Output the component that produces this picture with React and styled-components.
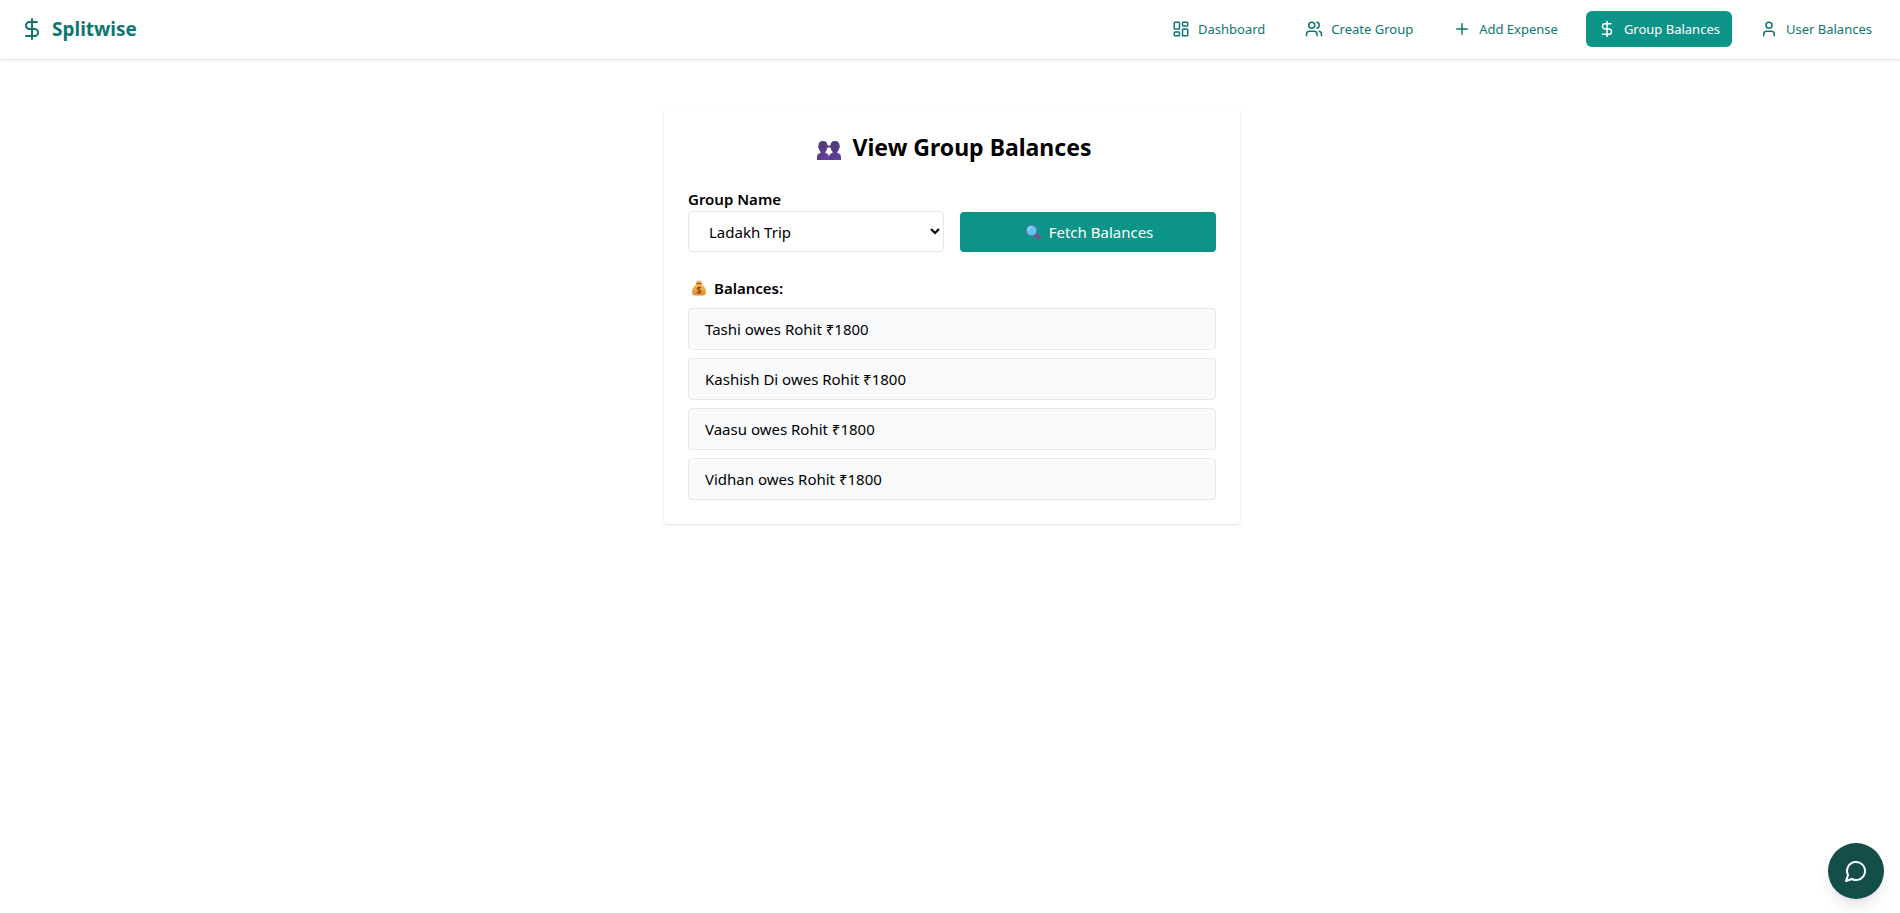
import React, { useState } from "react";
import styled, { createGlobalStyle, css } from "styled-components";
import { DollarSign, LayoutDashboard, Users, Plus, User } from "lucide-react";

const GlobalStyle = createGlobalStyle`
  *, *::before, *::after { box-sizing: border-box; }
  body {
    margin: 0;
    background: #ffffff;
    color: #000000;
    font-family: "Segoe UI", "Noto Sans", "Open Sans", sans-serif;
    font-size: 15px;
    line-height: 24px;
  }
  h1, h2, ul { margin: 0; padding: 0; }
  button, select { font: inherit; }
`;

const Header = styled.header`
  display: flex;
  align-items: center;
  justify-content: space-between;
  padding: 11px 16px 12px 20px;
  background: #ffffff;
  box-shadow: 0 1px 3px rgba(0, 0, 0, 0.1), 0 1px 2px -1px rgba(0, 0, 0, 0.1);
`;

const Brand = styled.a`
  display: flex;
  align-items: center;
  gap: 8px;
  color: #0f766e;
  font-size: 19px;
  font-weight: 700;
  line-height: 28px;
  text-decoration: none;
`;

const Nav = styled.nav`
  display: flex;
  align-items: center;
  gap: 16px;
`;

const NavLink = styled.a`
  display: flex;
  align-items: center;
  gap: 8px;
  padding: 8px 12px;
  border-radius: 6px;
  color: #0f766e;
  font-size: 13px;
  line-height: 20px;
  text-decoration: none;
  white-space: nowrap;
  ${({ $active }) =>
    $active &&
    css`
      background: #0d9488;
      color: #ffffff;
    `}
`;

const Main = styled.main`
  display: flex;
  justify-content: center;
  padding: 48px 16px 48px 20px;
`;

const Card = styled.section`
  width: 100%;
  max-width: 576px;
  padding: 24px;
  border-radius: 4px;
  background: #ffffff;
  box-shadow: 0 1px 3px rgba(0, 0, 0, 0.1), 0 1px 2px -1px rgba(0, 0, 0, 0.1);
`;

const Title = styled.h1`
  display: flex;
  align-items: center;
  justify-content: center;
  gap: 8px;
  margin-bottom: 24px;
  font-size: 23px;
  font-weight: 700;
  line-height: 32px;
`;

const Form = styled.form`
  display: grid;
  grid-template-columns: 1fr 1fr;
  align-items: end;
  gap: 16px;
  margin-bottom: 24px;
`;

const Field = styled.div`
  display: flex;
  flex-direction: column;
`;

const Label = styled.label`
  font-weight: 600;
`;

const Select = styled.select`
  width: 100%;
  height: 41px;
  padding: 8px 0 8px 16px;
  border: 1px solid #e5e7eb;
  border-radius: 4px;
  background: #ffffff;
  color: #000000;
`;

const FetchButton = styled.button`
  display: flex;
  align-items: center;
  justify-content: center;
  gap: 6px;
  padding: 8px 16px;
  border: 0;
  border-radius: 4px;
  background: #0d9488;
  color: #ffffff;
  cursor: pointer;
`;

const Subtitle = styled.h2`
  display: flex;
  align-items: center;
  gap: 6px;
  margin-bottom: 8px;
  font-size: 15px;
  font-weight: 600;
`;

const BalanceList = styled.ul`
  display: flex;
  flex-direction: column;
  gap: 8px;
  list-style: none;
`;

const BalanceItem = styled.li`
  padding: 8px 16px;
  border: 1px solid #e5e7eb;
  border-radius: 4px;
  background: #f9fafb;
`;

const ChatButton = styled.button`
  position: fixed;
  right: 16px;
  bottom: 14px;
  display: flex;
  align-items: center;
  justify-content: center;
  width: 56px;
  height: 56px;
  padding: 0;
  border: 0;
  border-radius: 50%;
  background: #134e4a;
  color: #ffffff;
  box-shadow: 0 10px 15px -3px rgba(0, 0, 0, 0.1), 0 4px 6px -4px rgba(0, 0, 0, 0.1);
  cursor: pointer;
`;

const PeopleIcon = () => (
  <svg width="32" height="28" viewBox="-1 -2 32 28" aria-hidden="true">
    <defs>
      <linearGradient id="person" x1="0" y1="0" x2="1" y2="1">
        <stop offset="0" stopColor="#433b6b" />
        <stop offset="1" stopColor="#6b3fa6" />
      </linearGradient>
    </defs>
    <g fill="url(#person)">
      <path d="M9 6C5.800 6 4.500 8 4.500 10.500C3.800 11 4 13 4.900 13.200C5.200 15 5.800 16 6.600 16.700V18L5 18.500Q3 19.300 3 22V25H15V22Q15 19.300 13 18.500L11.400 18V16.700C12.200 16 12.800 15 13.100 13.200C14 13 14.200 11 13.500 10.500C13.500 8 12.200 6 9 6Z" />
      <path d="M21 6C17.800 6 16.500 8 16.500 10.500C15.800 11 16 13 16.900 13.200C17.200 15 17.800 16 18.600 16.700V18L17 18.500Q15 19.300 15 22V25H27V22Q27 19.300 25 18.500L23.400 18V16.700C24.200 16 24.800 15 25.100 13.200C26 13 26.200 11 25.500 10.500C25.500 8 24.200 6 21 6Z" />
      <path d="M13 10.500H17V12.500H13Z" />
    </g>
  </svg>
);

const MagnifierIcon = () => (
  <svg width="20" height="16" viewBox="-2 0 20 16" aria-hidden="true">
    <path d="M10.500 10.500L14 14" stroke="#8c4a8c" strokeWidth="3.200" strokeLinecap="round" />
    <circle cx="6.500" cy="6.500" r="5.500" fill="#5cc8ea" stroke="#5a6cae" strokeWidth="1.200" />
    <path d="M3.300 6.500A3.300 3.300 0 0 1 6.500 3.200" fill="none" stroke="#8fe0f5" strokeWidth="1.200" />
  </svg>
);

const MoneyBagIcon = () => (
  <svg width="20" height="18" viewBox="0 0 20 18" aria-hidden="true">
    <defs>
      <linearGradient id="bag" x1="0" y1="0" x2="0" y2="1">
        <stop offset="0" stopColor="#fbc54a" />
        <stop offset="1" stopColor="#e8862a" />
      </linearGradient>
    </defs>
    <path d="M8.500 5C5.500 7 4 10 4 13C4 15.600 5.600 16.500 8 16.500H14C16.400 16.500 18 15.600 18 13C18 10 16.500 7 13.500 5Z" fill="url(#bag)" />
    <path d="M8.300 2L9.500 2.300L11 1.500L12.500 2.300L13.700 2L12.900 4.300H9.100Z" fill="#f0a43a" />
    <path d="M8.500 4.700H13.500" stroke="#a8552b" strokeWidth="1.300" strokeLinecap="round" />
    <path d="M12.900 9.200Q12.600 8.300 11 8.300Q9.300 8.300 9.300 9.800Q9.300 10.900 11 11.100Q12.900 11.300 12.900 12.600Q12.900 14 11 14Q9.300 14 9 13M11 7.300V15" fill="none" stroke="#8a4a24" strokeWidth="1.200" />
  </svg>
);

const ChatIcon = () => (
  <svg width="24" height="24" viewBox="0 0 24 24" fill="none" stroke="currentColor" strokeWidth="2" strokeLinecap="round" strokeLinejoin="round" aria-hidden="true">
    <path d="M7.900 20A9 9 0 1 0 4 16.100L2 22Z" />
  </svg>
);

const links = [
  { label: "Dashboard", icon: LayoutDashboard },
  { label: "Create Group", icon: Users },
  { label: "Add Expense", icon: Plus },
  { label: "Group Balances", icon: DollarSign, active: true },
  { label: "User Balances", icon: User },
];

const balances = [
  { from: "Tashi", to: "Rohit", amount: 1800 },
  { from: "Kashish Di", to: "Rohit", amount: 1800 },
  { from: "Vaasu", to: "Rohit", amount: 1800 },
  { from: "Vidhan", to: "Rohit", amount: 1800 },
];

export default function App() {
  const [group, setGroup] = useState("Ladakh Trip");
  return (
    <>
      <GlobalStyle />
      <Header>
        <Brand href="#">
          <DollarSign size={24} />
          Splitwise
        </Brand>
        <Nav>
          {links.map(({ label, icon: Icon, active }) => (
            <NavLink key={label} href="#" $active={active} aria-current={active ? "page" : undefined}>
              <Icon size={18} />
              {label}
            </NavLink>
          ))}
        </Nav>
      </Header>
      <Main>
        <Card>
          <Title>
            <PeopleIcon />
            View Group Balances
          </Title>
          <Form onSubmit={(e) => e.preventDefault()}>
            <Field>
              <Label htmlFor="group">Group Name</Label>
              <Select id="group" value={group} onChange={(e) => setGroup(e.target.value)}>
                <option>Ladakh Trip</option>
              </Select>
            </Field>
            <FetchButton type="submit">
              <MagnifierIcon />
              Fetch Balances
            </FetchButton>
          </Form>
          <Subtitle>
            <MoneyBagIcon />
            Balances:
          </Subtitle>
          <BalanceList>
            {balances.map(({ from, to, amount }) => (
              <BalanceItem key={from}>{`${from} owes ${to} ₹${amount}`}</BalanceItem>
            ))}
          </BalanceList>
        </Card>
      </Main>
      <ChatButton type="button" aria-label="Open chat">
        <ChatIcon />
      </ChatButton>
    </>
  );
}
